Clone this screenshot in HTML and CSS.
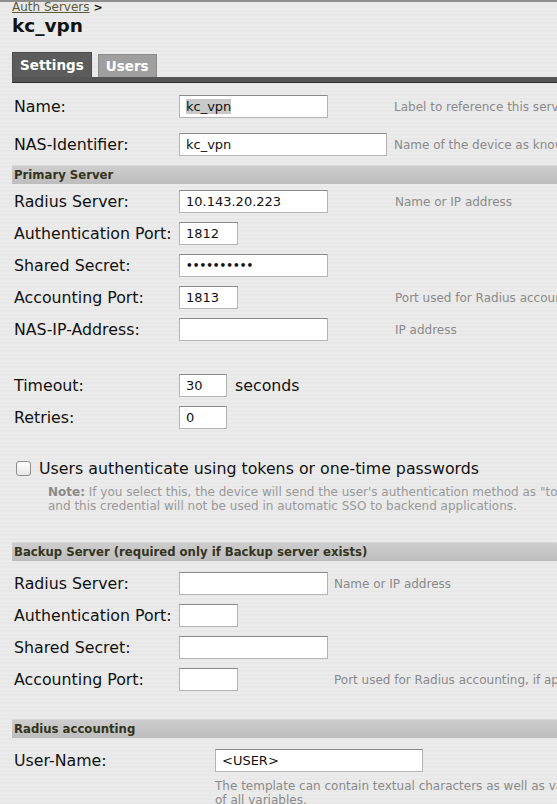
FILE: index.html
```html
<!DOCTYPE html>
<html>
<head>
<meta charset="utf-8">
<link rel="stylesheet" href="styles.css">
</head>
<body>
<div class="page">
  <div class="topline"></div>
  <div class="crumb"><a href="#">Auth Servers</a> <b>&gt;</b></div>
  <h1 class="title">kc_vpn</h1>
  <div class="tabs">
    <div class="tab active">Settings</div>
    <div class="tab">Users</div>
  </div>
  <div class="tabbar"></div>

  <div class="grid g1">
    <div class="label">Name:</div>
    <div class="field"><div class="input w148"><span class="sel">kc_vpn</span></div></div>
    <div class="help">Label to reference this server</div>
    <div class="label">NAS-Identifier:</div>
    <div class="field"><div class="input w207">kc_vpn</div></div>
    <div class="help">Name of the device as known</div>
  </div>

  <div class="section">Primary Server</div>
  <div class="grid g2">
    <div class="label">Radius Server:</div>
    <div class="field"><div class="input w148">10.143.20.223</div></div>
    <div class="help">Name or IP address</div>
    <div class="label">Authentication Port:</div>
    <div class="field"><div class="input w58">1812</div></div>
    <div class="help"></div>
    <div class="label">Shared Secret:</div>
    <div class="field"><div class="input w148 dots">&#8226;&#8226;&#8226;&#8226;&#8226;&#8226;&#8226;&#8226;&#8226;&#8226;</div></div>
    <div class="help"></div>
    <div class="label">Accounting Port:</div>
    <div class="field"><div class="input w58">1813</div></div>
    <div class="help">Port used for Radius accounting</div>
    <div class="label">NAS-IP-Address:</div>
    <div class="field"><div class="input w148"></div></div>
    <div class="help">IP address</div>
  </div>

  <div class="grid g3">
    <div class="label">Timeout:</div>
    <div class="field"><div class="input w47">30</div><span class="unit">seconds</span></div>
    <div class="label">Retries:</div>
    <div class="field"><div class="input w47">0</div></div>
  </div>

  <div class="check">
    <span class="box"></span>
    <span class="checktext">Users authenticate using tokens or one-time passwords</span>
  </div>
  <div class="note"><b>Note:</b> If you select this, the device will send the user's authentication method as "token",<br>and this credential will not be used in automatic SSO to backend applications.</div>

  <div class="section">Backup Server (required only if Backup server exists)</div>
  <div class="grid g4">
    <div class="label">Radius Server:</div>
    <div class="field"><div class="input w148"></div></div>
    <div class="help">Name or IP address</div>
    <div class="label">Authentication Port:</div>
    <div class="field"><div class="input w58"></div></div>
    <div class="help"></div>
    <div class="label">Shared Secret:</div>
    <div class="field"><div class="input w148"></div></div>
    <div class="help"></div>
    <div class="label">Accounting Port:</div>
    <div class="field"><div class="input w58"></div></div>
    <div class="help">Port used for Radius accounting, if applicable</div>
  </div>

  <div class="section s3">Radius accounting</div>
  <div class="grid g5">
    <div class="label">User-Name:</div>
    <div class="field"><div class="input w207">&lt;USER&gt;</div></div>
    <div class="label"></div>
    <div class="help wide">The template can contain textual characters as well as variables.<br>of all variables.</div>
  </div>
</div>
</body>
</html>
```

FILE: styles.css
```css
html, body {
  margin: 0;
  padding: 0;
}
body {
  width: 557px;
  height: 804px;
  overflow: hidden;
  font-family: "DejaVu Sans", Verdana, sans-serif;
  color: #111;
  background-color: #e9e9e9;
  background-image: repeating-linear-gradient(180deg, #ebebeb 0px, #ebebeb 2px, #e6e6e6 3px, #e9e9e9 4px);
}
.page {
  position: relative;
  white-space: nowrap;
}
.topline {
  height: 2px;
  background: #8f8f8f;
}
.crumb {
  padding-left: 12px;
  font-size: 12px;
  line-height: 11px;
  height: 11px;
  color: #333;
  overflow: hidden;
}
.crumb a {
  color: #5a5a3c;
  text-decoration: underline;
}
.crumb b {
  font-size: 11px;
  color: #222;
}
.title {
  margin: 2px 0 0 12px;
  font-size: 18.5px;
  line-height: 22px;
  font-weight: bold;
  color: #111;
}
.tabs {
  display: flex;
  align-items: flex-end;
  gap: 6px;
  margin: 15px 0 0 12px;
  height: 25px;
}
.tab {
  font-size: 13.5px;
  font-weight: bold;
  color: #fff;
  height: 23px;
  line-height: 22px;
  padding: 0 7px;
  background: #9f9f9f;
  border: 1px solid #8c8c8c;
  border-bottom: none;
  box-sizing: border-box;
}
.tab.active {
  height: 25px;
  line-height: 24px;
  background: #5c5c5c;
  border-color: #4a4a4a;
}
.tabbar {
  margin-left: 12px;
  height: 5px;
  background: #555;
  border-bottom: 1px solid #2e2e2e;
}
.grid {
  display: grid;
  margin-left: 14px;
  align-items: center;
}
.label {
  font-size: 15.8px;
}
.field {
  display: flex;
  align-items: center;
}
.help {
  font-size: 12px;
  color: #8a8a8a;
}
.input {
  box-sizing: border-box;
  height: 23px;
  background: #fff;
  border: 1px solid #b4b4b4;
  border-top-color: #8a8a8a;
  font-size: 13px;
  line-height: 21px;
  padding-left: 6px;
  color: #111;
  overflow: hidden;
}
.input .sel {
  background: #c9c9c9;
}
.input.dots {
  font-size: 10.5px;
  font-weight: bold;
}
.w148 { width: 149px; }
.w207 { width: 208px; }
.w58 { width: 59px; }
.w47 { width: 48px; }
.g1 {
  grid-template-columns: 165px 215px auto;
  row-gap: 15px;
  margin-top: 12px;
}
.g2 {
  grid-template-columns: 165px 216px auto;
  row-gap: 9px;
  margin-top: 6px;
}
.g3 {
  grid-template-columns: 165px auto;
  row-gap: 9px;
  margin-top: 33px;
}
.g4 {
  grid-template-columns: 165px 155px auto;
  row-gap: 9px;
  margin-top: 11px;
}
.g5 {
  grid-template-columns: 201px auto;
  row-gap: 7px;
  margin-top: 11px;
}
.g5 .help {
  line-height: 14px;
}
.unit {
  font-size: 15.8px;
  margin-left: 8px;
}
.section {
  margin: 9px 0 0 12px;
  height: 18px;
  line-height: 18px;
  padding-left: 2px;
  font-size: 11.7px;
  font-weight: bold;
  color: #34341c;
  background: linear-gradient(180deg, #cdcdcd, #bdbdbd);
  border-top: 1px solid #d8d8d8;
}
.check {
  display: flex;
  align-items: center;
  margin: 31px 0 0 16px;
  height: 16px;
}
.box {
  width: 13px;
  height: 13px;
  border: 1px solid #8d8d8d;
  border-radius: 3px;
  background: linear-gradient(180deg, #ffffff, #e6e6e6);
  flex: none;
}
.checktext {
  margin-left: 8px;
  font-size: 15.8px;
}
.note {
  margin: 9px 0 0 48px;
  font-size: 12px;
  line-height: 14px;
  color: #999;
}
.note b {
  color: #8a8a8a;
}
.note + .section {
  margin-top: 29px;
}
.section.s3 {
  margin-top: 28px;
}
```
